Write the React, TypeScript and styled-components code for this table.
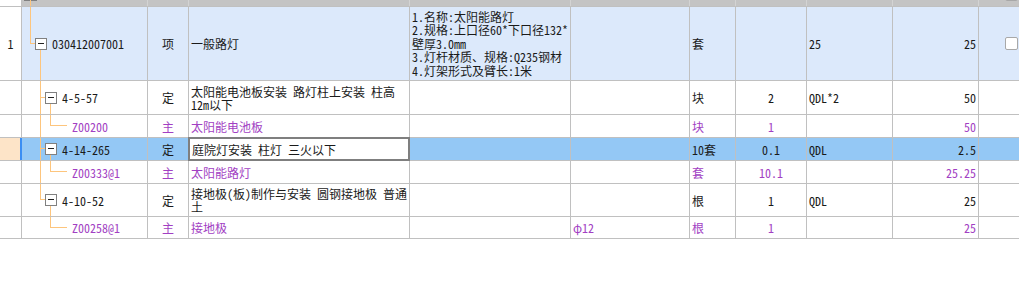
import React from 'react'
import styled, { createGlobalStyle } from 'styled-components'

const GlobalStyle = createGlobalStyle`
  html, body {
    margin: 0;
    padding: 0;
    background: #ffffff;
  }
  body {
    font-family: "Noto Sans CJK SC", "Liberation Sans", sans-serif;
    font-size: 12px;
    font-feature-settings: "hwid" 1;
    color: #1a1a1a;
  }
`

const COLS = '22px 126px 41px 221px 161px 119px 46px 71px 86px 86px 1fr'
const GRID_LINE = '#c0c0c0'
const TREE_LINE = '#fdc57d'
const PURPLE = '#a23fc3'

const Sheet = styled.div`
    width: 100%;
    overflow: hidden;
`;

const Row = styled.div<{ $h: number; $bg: string }>`
    display: grid;
    grid-template-columns: ${COLS};
    height: ${(p) => p.$h}px;
    background: ${(p) => p.$bg};
    border-bottom: 1px solid ${GRID_LINE};
    box-sizing: border-box;
`;

const HeadCell = styled.div<{ $blank?: boolean }>`
    background: ${(p) => p.$blank ? '#ffffff' : '#c4c4c4'};
    border-right: 1px solid ${(p) => p.$blank ? GRID_LINE : '#d3d3d3'};
    overflow: hidden;
    box-sizing: border-box;
`;

type Align = 'left' | 'center' | 'right'

const Cell = styled.div<{ $align?: Align; $main?: boolean }>`
    display: flex;
    align-items: center;
    justify-content: ${(p) => p.$align === 'center' ? 'center' : p.$align === 'right' ? 'flex-end' : 'flex-start'};
    text-align: ${(p) => p.$align ?? 'left'};
    padding: 0 2px;
    border-right: 1px solid ${GRID_LINE};
    box-sizing: border-box;
    min-width: 0;
    line-height: 13px;
    color: ${(p) => p.$main ? PURPLE : '#1a1a1a'};
    overflow: hidden;
`;

const RowNo = styled(Cell)<{ $active?: boolean }>`
    justify-content: center;
    background: ${(p) => p.$active ? '#fde4c8' : '#ffffff'};
    border-right: ${(p) => p.$active ? '2px solid #3b8ef3' : `1px solid ${GRID_LINE}`};
`;

const CodeCell = styled(Cell)`
    padding: 0;
    overflow: visible;
`;

const CodeText = styled.span`
    margin-left: 5px;
    white-space: nowrap;
`;

const Editor = styled(Cell)`
    align-self: start;
    height: calc(100% + 2px);
    margin: -1px 0 0 -1px;
    border: 2px solid #7f7f7f;
    background: #ffffff;
    position: relative;
    z-index: 1;
`;

const Lines = styled.div`
    line-height: 13.5px;
`;

const CheckCell = styled.div<{ $top?: boolean }>`
    display: flex;
    align-items: ${(p) => p.$top ? 'flex-start' : 'center'};
    padding-left: 26px;
    overflow: hidden;
`;

const Checkbox = styled.span<{ $clipped?: boolean }>`
    display: block;
    width: 13px;
    height: 13px;
    box-sizing: border-box;
    border: 1px solid #a8a8a8;
    border-radius: 2px;
    background: #ffffff;
    margin-top: ${(p) => p.$clipped ? '-12px' : '0'};
`;

interface TreeProps {
    h: number;
    level: number;
    toggle?: boolean;
    last?: boolean;
    guides?: number[];
}

// orange connector lines + the collapse box, drawn pixel by pixel
function TreeGutter({ h, level, toggle, last, guides = [] }: TreeProps) {
    const p = 8 + 10 * level
    const m = Math.floor((h - 1) / 2)
    const w = p + 17
    return (
        <svg width={w} height={h} style={{ display: 'block', flexShrink: 0 }}>
            {guides.map((g) => (
                <rect key={g} x={8 + 10 * g} y={0} width={1} height={h} fill={TREE_LINE} />
            ))}
            <rect x={p} y={0} width={1} height={last ? m + 1 : h} fill={TREE_LINE} />
            <rect x={p} y={m} width={toggle ? 5 : 17} height={1} fill={TREE_LINE} />
            {toggle && (
                <>
                    <rect x={p + 10} y={m + 7} width={1} height={h - m - 7} fill={TREE_LINE} />
                    <rect x={p + 5.5} y={m - 4.5} width={11} height={11} fill="#ffffff" stroke="#808080" />
                    <rect x={p + 8} y={m} width={6} height={1} fill="#222222" />
                </>
            )}
        </svg>
    )
}

interface Item {
    no?: string;
    code: string;
    type: string;
    name: string;
    feat?: string[];
    spec?: string;
    unit: string;
    qty?: string;
    expr?: string;
    price: string;
    kind: 'list' | 'quota' | 'main';
    h: number;
    tree: Omit<TreeProps, 'h'>;
    selected?: boolean;
    check?: boolean;
}

const rows: Item[] = [
    {
        no: '1', code: '030412007001', type: '项', name: '一般路灯',
        feat: ['1.名称:太阳能路灯', '2.规格:上口径60*下口径132*壁厚3.0mm', '3.灯杆材质、规格:Q235钢材', '4.灯架形式及臂长:1米'],
        unit: '套', expr: '25', price: '25', kind: 'list', h: 74, check: true,
        tree: { level: 0, toggle: true, last: true },
    },
    {
        code: '4-5-57', type: '定', name: '太阳能电池板安装 路灯柱上安装 柱高12m以下',
        unit: '块', qty: '2', expr: 'QDL*2', price: '50', kind: 'quota', h: 34,
        tree: { level: 1, toggle: true },
    },
    {
        code: 'Z00200', type: '主', name: '太阳能电池板', unit: '块', qty: '1', price: '50',
        kind: 'main', h: 23, tree: { level: 2, last: true, guides: [1] },
    },
    {
        code: '4-14-265', type: '定', name: '庭院灯安装 柱灯 三火以下', unit: '10套', qty: '0.1',
        expr: 'QDL', price: '2.5', kind: 'quota', h: 23, selected: true,
        tree: { level: 1, toggle: true },
    },
    {
        code: 'Z00333@1', type: '主', name: '太阳能路灯', unit: '套', qty: '10.1', price: '25.25',
        kind: 'main', h: 23, tree: { level: 2, last: true, guides: [1] },
    },
    {
        code: '4-10-52', type: '定', name: '接地极(板)制作与安装 圆钢接地极 普通土', unit: '根', qty: '1',
        expr: 'QDL', price: '25', kind: 'quota', h: 33,
        tree: { level: 1, toggle: true, last: true },
    },
    {
        code: 'Z00258@1', type: '主', name: '接地极', spec: 'φ12', unit: '根', qty: '1', price: '25',
        kind: 'main', h: 22, tree: { level: 2, last: true },
    },
]

function rowBg(item: Item) {
    if (item.selected) return '#94c8f5'
    if (item.kind === 'list') return '#dce9fb'
    return '#ffffff'
}

function DataRow({ item }: { item: Item }) {
    const main = item.kind === 'main'
    return (
        <Row $h={item.h} $bg={rowBg(item)}>
            <RowNo $active={item.selected}>{item.no}</RowNo>
            <CodeCell $main={main}>
                <TreeGutter h={item.h - 1} {...item.tree} />
                <CodeText>{item.code}</CodeText>
            </CodeCell>
            <Cell $align="center" $main={main}>{item.type}</Cell>
            {item.selected
                ? <Editor>{item.name}</Editor>
                : <Cell $main={main}>{item.name}</Cell>}
            <Cell>
                {item.feat && (
                    <Lines>
                        {item.feat.map((f) => <div key={f}>{f}</div>)}
                    </Lines>
                )}
            </Cell>
            <Cell $main={main}>{item.spec}</Cell>
            <Cell $main={main}>{item.unit}</Cell>
            <Cell $align="center" $main={main}>{item.qty}</Cell>
            <Cell $main={main}>{item.expr}</Cell>
            <Cell $align="right" $main={main}>{item.price}</Cell>
            <CheckCell>{item.check && <Checkbox />}</CheckCell>
        </Row>
    )
}

export default function App() {
    return (
        <>
            <GlobalStyle />
            <Sheet>
                <Row $h={7} $bg="#c4c4c4">
                    <HeadCell $blank />
                    <HeadCell>
                        <svg width={15} height={6} style={{ display: 'block' }}>
                            <rect x={2.5} y={-11.5} width={12} height={12} fill="#ffffff" stroke="#808080" />
                            <rect x={8} y={0} width={1} height={6} fill={TREE_LINE} />
                        </svg>
                    </HeadCell>
                    <HeadCell />
                    <HeadCell />
                    <HeadCell />
                    <HeadCell />
                    <HeadCell />
                    <HeadCell />
                    <HeadCell />
                    <HeadCell />
                    <CheckCell $top>
                        <Checkbox $clipped />
                    </CheckCell>
                </Row>
                {rows.map((r) => <DataRow key={r.code} item={r} />)}
            </Sheet>
        </>
    )
}
